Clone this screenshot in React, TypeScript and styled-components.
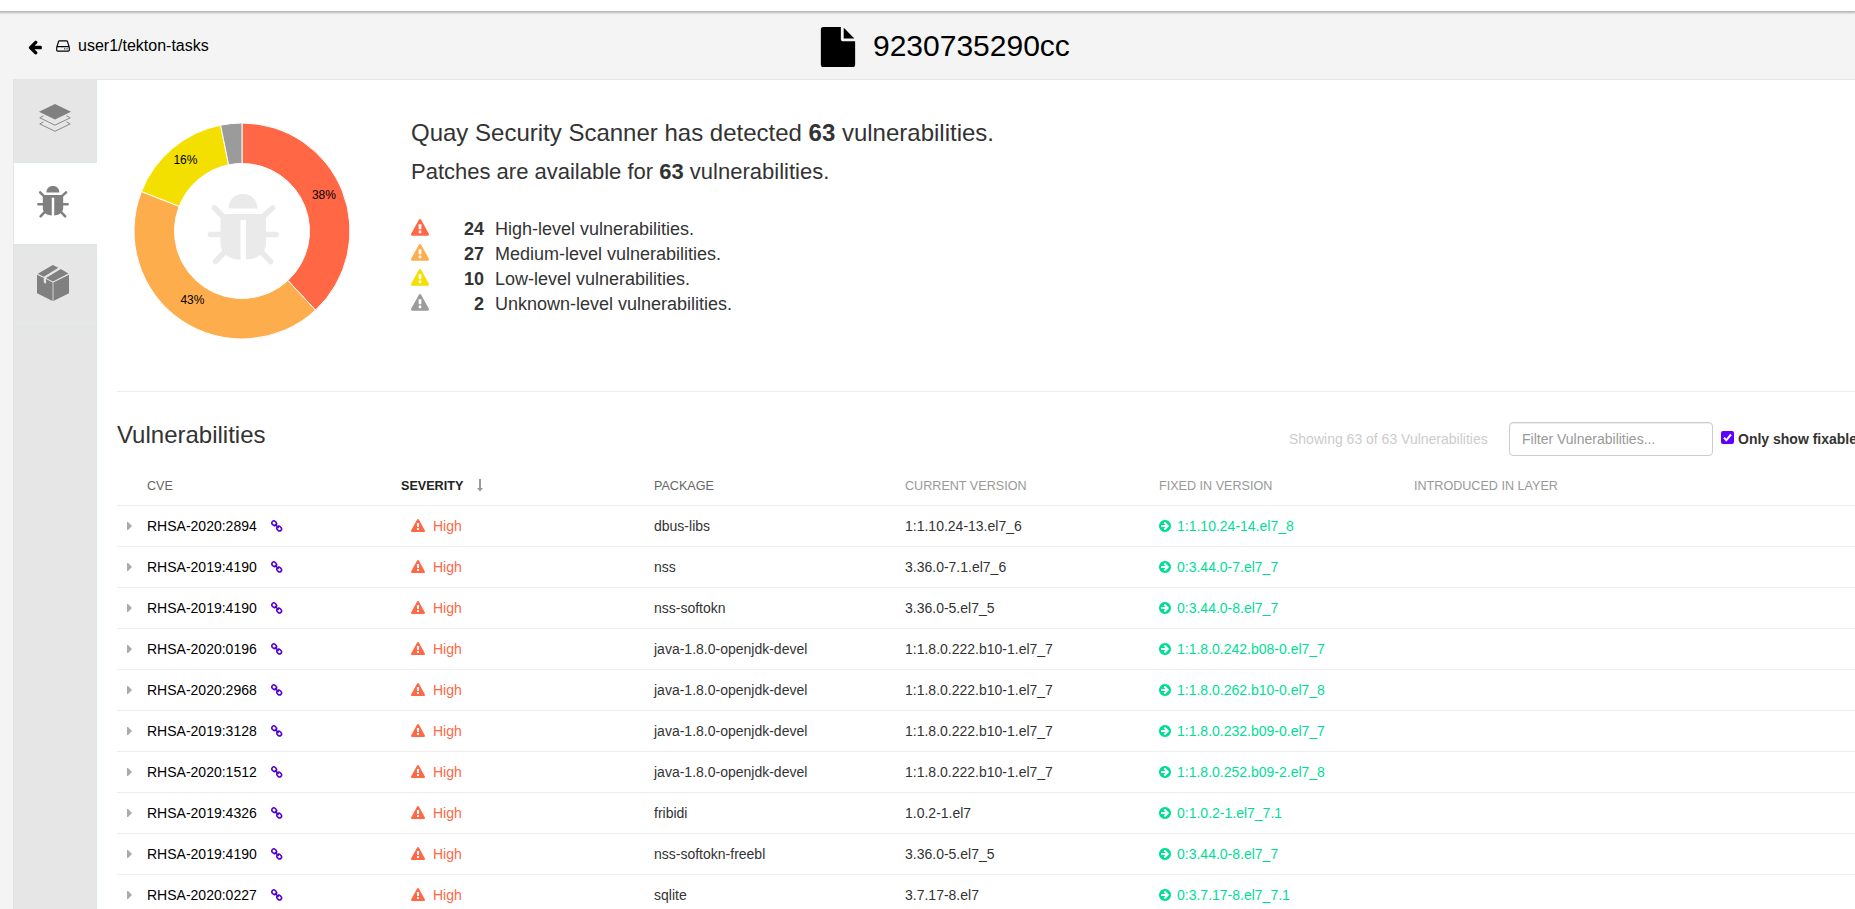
import React from 'react';
import styled, { createGlobalStyle } from 'styled-components';

const Global = createGlobalStyle`
  * { box-sizing: border-box; }
  html, body { margin: 0; height: 100%; overflow: hidden; }
  body { font-family: "Liberation Sans", Arial, sans-serif; font-size: 14px; line-height: 20px; color: #333; background: #f4f4f4; }
`;

const Page = styled.div`width: 1855px; height: 909px; overflow: hidden; display: flex; flex-direction: column; background: #f4f4f4;`;
const NavEdge = styled.div`height: 11px; flex: none; background: #fff; box-shadow: 0 1px 2px 1px rgba(0,0,0,.25); z-index: 1;`;
const Header = styled.header`height: 68px; flex: none; display: grid; grid-template-columns: 818px 1fr; color: #000;`;
const Crumb = styled.a`display: flex; align-items: center; height: 68px; padding: 2px 0 0 27px; font-size: 16px;`;
const Title = styled.h2`display: flex; align-items: center; margin: 0; padding-top: 2px; font-size: 30px; font-weight: 400;`;
const Icon = styled.svg<{ $w: number; $h?: number; $m?: string }>`
  display: block; flex: none; overflow: visible; fill: currentColor;
  width: ${p => p.$w}px; height: ${p => p.$h ?? p.$w}px; margin: ${p => p.$m ?? '0'};
`;
const Frame = styled.div`flex: 1; min-height: 0; margin-left: 13px; display: flex; width: 1900px; border: solid #e4e4e4; border-width: 1px 0 0 1px; background: #fff;`;
const Tabs = styled.nav`width: 83px; flex: none; background: #e6e6e6; border-right: 1px solid #dde8ee;`;
const Tab = styled.div<{ $active?: boolean; $pad: string }>`
  width: 83px; height: ${p => (p.$active ? 82 : 83)}px; padding: ${p => p.$pad}; color: #808080;
  background: ${p => (p.$active ? '#fff' : 'transparent')};
  border-bottom: 1px solid #dbe7ed; border-right: ${p => (p.$active ? 0 : 1)}px solid #dbe7ed;
`;
const Main = styled.main`flex: 1; min-width: 0; padding-left: 20px;`;
const Summary = styled.section`height: 312px; display: flex; border-bottom: 1px solid #eee;`;
const Donut = styled.svg`display: block; width: 250px; height: 300px; flex: none; overflow: visible; font-size: 12px;`;
const Findings = styled.div`padding: 37px 0 0 44px;`;
const Lead = styled.div<{ $size: number }>`font-size: ${p => p.$size}px; line-height: 32px; margin-bottom: 7px;`;
const Levels = styled.div`margin-top: 28px;`;
const Level = styled.div`display: grid; grid-template-columns: 18px 55px auto; column-gap: 0; height: 25px; align-items: center; font-size: 18px;`;
const Count = styled.b`text-align: right;`;
const LevelText = styled.span`padding-left: 11px;`;
const Toolbar = styled.div`height: 73px; display: flex; align-items: flex-start; padding-top: 30px;`;
const Heading = styled.h3`width: 1172px; flex: none; margin: -2px 0 0; font-size: 24px; line-height: 30px; font-weight: 400;`;
const Showing = styled.span`width: 220px; flex: none; padding-top: 7px; color: #ccc;`;
const Filter = styled.input`
  width: 204px; height: 34px; padding: 6px 12px; border: 1px solid #ccc; border-radius: 4px; font: inherit; background: #fff;
  box-shadow: inset 0 1px 1px rgba(0,0,0,.075); flex: none;
  &::placeholder { color: #999; opacity: 1; }
`;
const Fixable = styled.label`display: flex; padding: 7px 0 0 8px; white-space: nowrap; font-weight: 700;`;
const Check = styled.svg`width: 13px; height: 13px; margin: 2px 4px 0 0; display: block;`;
const Grid = styled.div<{ $head?: boolean }>`
  display: grid; grid-template-columns: 30px 254px 253px 251px 254px 255px 1fr; align-items: center;
  height: 41px; border-bottom: 1px solid #eee;
  padding-top: ${p => (p.$head ? 2 : 0)}px;
  font-size: ${p => (p.$head ? 12.6 : 14)}px;
`;
const Th = styled.span<{ $tone?: string }>`
  display: flex; align-items: center; text-transform: uppercase; color: ${p => p.$tone ?? '#666'}; font-weight: ${p => (p.$tone === '#222' ? 700 : 400)};
`;
const Cell = styled.span<{ $color?: string; $pad?: number }>`
  display: flex; align-items: center; white-space: nowrap; color: ${p => p.$color ?? '#333'}; padding-left: ${p => p.$pad ?? 0}px;
`;

type IconProps = { w: number; m?: string };
const Glyph = ({ d, w, m }: IconProps & { d: string }) => (
  <Icon viewBox="0 0 1792 1792" $w={w} $m={m}><path d={d} /></Icon>
);
const WARN = 'M1024 1375v-190q0-14-9.5-23.5t-22.5-9.5h-192q-13 0-22.5 9.5t-9.5 23.5v190q0 14 9.5 23.5t22.5 9.5h192q13 0 22.5-9.5t9.5-23.5zm-2-374l18-459q0-12-10-19-13-11-24-11h-220q-11 0-24 11-10 7-10 21l17 457q0 10 10 16.5t24 6.5h185q14 0 23.5-6.5t10.5-16.5zm-14-934l768 1408q35 63-2 126-17 29-46.5 46t-63.5 17h-1536q-34 0-63.5-17t-46.5-46q-37-63-2-126l768-1408q17-31 47-49t65-18 65 18 47 49z';
const BACK = 'M1664 896v128q0 53-32.5 90.5t-84.5 37.5h-704l293 294q38 36 38 90t-38 90l-75 76q-37 37-90 37-52 0-91-37l-651-652q-37-37-37-90 0-52 37-91l651-650q38-38 91-38 52 0 90 38l75 74q38 38 38 91t-38 91l-293 293h704q52 0 84.5 37.5t32.5 90.5z';
const FILE = 'M1152 512v-472q22 14 36 28l408 408q14 14 28 36h-472zm-128 32q0 40 28 68t68 28h544v1056q0 40-28 68t-68 28h-1344q-40 0-68-28t-28-68v-1600q0-40 28-68t68-28h800v544z';
const GO = 'M1413 896q0-27-18-45l-91-91-362-362q-18-18-45-18t-45 18l-91 91q-18 18-18 45t18 45l189 189h-502q-26 0-45 19t-19 45v128q0 26 19 45t45 19h502l-189 189q-19 19-19 45t19 45l91 91q18 18 45 18t45-18l362-362 91-91q18-18 18-45zm251 0q0 209-103 385.5t-279.5 279.5-385.5 103-385.5-103-279.5-279.5-103-385.5 103-385.5 279.5-279.5 385.5-103 385.5 103 279.5 279.5 103 385.5z';
const HDD = 'M1168 1216a80 80 0 1 1-160 0a80 80 0 1 1 160 0zm256 0a80 80 0 1 1-160 0a80 80 0 1 1 160 0zm112 160v-320q0-13-9.5-22.5t-22.5-9.5h-1216q-13 0-22.5 9.5t-9.5 22.5v320q0 13 9.5 22.5t22.5 9.5h1216q13 0 22.5-9.5t9.5-22.5zm-1230-480h1180l-157-482q-4-13-16-21.5t-26-8.5h-782q-14 0-26 8.5t-16 21.5zm1358 160v320q0 66-47 113t-113 47h-1216q-66 0-113-47t-47-113v-320q0-25 16-75l197-606q17-53 63-86t101-33h782q55 0 101 33t63 86l197 606q16 50 16 75z';

const BugShape = () => (
  <>
    <path d="M21 14.5C21 6 27 0 35.500 0S50 6 50 14.500z" />
    <path d="M13 20H58.500V49C58.500 59 50 65.500 38.500 65.500V26H33V65.500C21 65.500 13 59 13 49z" />
    <path d="M7 14L16 23M65 14L55 23M3 40.500H14M58 40.500H68.500M8 67.500L19 56M63 67.500L52 56" fill="none" stroke="currentColor" strokeWidth="5.600" strokeLinecap="round" />
  </>
);
const Bug = ({ w, m }: IconProps) => <Icon viewBox="0 0 71.500 71" $w={w} $m={m}><BugShape /></Icon>;
const Layers = () => (
  <Icon viewBox="0 0 32 28" $w={32} $h={28}>
    <path d="M16 0L32 7.700L16 15.400L0 7.700z" />
    <path d="M4.500 11.800L.8 13.800L16 21.200L31.200 13.800L27.500 11.800M4.500 17.900L.8 19.900L16 27.300L31.200 19.900L27.500 17.900" fill="none" stroke="currentColor" strokeWidth=".9" />
  </Icon>
);
const Box = () => (
  <Icon viewBox="0 0 32 36" $w={32} $h={36}>
    <path d="M0 9.800L6.800 13V17.600L9 18.800V14.100L15.600 17.400V36L0 28.300zM16.400 17.400L32 9.800V28.300L16.400 36zM.8 8.700L15.800 0L21.400 2.700L6.800 11.700zM9 12.900L23.800 4L31.400 8.600L16 16.400z" />
  </Icon>
);
const Link = () => (
  <Icon viewBox="0 0 12 12" $w={12} $m="0 0 0 14px">
    <g fill="none" stroke="#5000d0" strokeWidth="1.500">
      <rect x="-2.500" y="-2" width="5" height="4" rx="2" transform="translate(3.200 3.300) rotate(45)" />
      <rect x="-2.500" y="-2" width="5" height="4" rx="2" transform="translate(8.200 8.600) rotate(45)" />
      <path d="M3.800 3.900L7.600 8" />
    </g>
  </Icon>
);
const Sort = () => (
  <Icon viewBox="0 0 6 13" $w={6} $h={13} $m="-1px 0 0 14px"><path fill="#999" d="M2 0H4V9H6L3 12.500L0 9H2z" /></Icon>
);

const slices = [
  { n: 24, color: '#ff6745', label: '38%' },
  { n: 27, color: '#fead4d', label: '43%' },
  { n: 10, color: '#f3e000', label: '16%' },
  { n: 2, color: '#9b9b9b', label: '' },
];
const CX = 125, CY = 151, R = 108, r = 67.5;
const at = (a: number, q: number) => [CX + q * Math.sin(a), CY - q * Math.cos(a)];
let acc = 0;
const arcs = slices.map(s => {
  const a = (acc / 63) * 2 * Math.PI;
  acc += s.n;
  const b = (acc / 63) * 2 * Math.PI;
  const big = b - a > Math.PI ? 1 : 0;
  return {
    ...s,
    d: `M${at(a, R)}A${R} ${R} 0 ${big} 1 ${at(b, R)}L${at(b, r)}A${r} ${r} 0 ${big} 0 ${at(a, r)}z`,
    mid: at((a + b) / 2, 88),
  };
});

const levels = [
  ['#ff6745', '24', 'High'], ['#fead4d', '27', 'Medium'], ['#f3e000', '10', 'Low'], ['#9b9b9b', '2', 'Unknown'],
];
const rows = [
  ['2020:2894', 'dbus-libs', '1:1.10.24-13.el7_6', '1:1.10.24-14.el7_8'],
  ['2019:4190', 'nss', '3.36.0-7.1.el7_6', '0:3.44.0-7.el7_7'],
  ['2019:4190', 'nss-softokn', '3.36.0-5.el7_5', '0:3.44.0-8.el7_7'],
  ['2020:0196', 'java-1.8.0-openjdk-devel', '1:1.8.0.222.b10-1.el7_7', '1:1.8.0.242.b08-0.el7_7'],
  ['2020:2968', 'java-1.8.0-openjdk-devel', '1:1.8.0.222.b10-1.el7_7', '1:1.8.0.262.b10-0.el7_8'],
  ['2019:3128', 'java-1.8.0-openjdk-devel', '1:1.8.0.222.b10-1.el7_7', '1:1.8.0.232.b09-0.el7_7'],
  ['2020:1512', 'java-1.8.0-openjdk-devel', '1:1.8.0.222.b10-1.el7_7', '1:1.8.0.252.b09-2.el7_8'],
  ['2019:4326', 'fribidi', '1.0.2-1.el7', '0:1.0.2-1.el7_7.1'],
  ['2019:4190', 'nss-softokn-freebl', '3.36.0-5.el7_5', '0:3.44.0-8.el7_7'],
  ['2020:0227', 'sqlite', '3.7.17-8.el7', '0:3.7.17-8.el7_7.1'],
];

export default function App() {
  return (
    <Page>
      <Global />
      <NavEdge />
      <Header>
        <Crumb>
          <Glyph d={BACK} w={16} m="2px 0 0 0" />
          <Glyph d={HDD} w={16} m="-1px 7px 0 12px" />
          user1/tekton-tasks
        </Crumb>
        <Title><Glyph d={FILE} w={40} m="1px 15px 0 0" />9230735290cc</Title>
      </Header>
      <Frame>
        <Tabs>
          <Tab $pad="24px 0 0 25px"><Layers /></Tab>
          <Tab $active $pad="23px 0 0 23px"><Bug w={32} /></Tab>
          <Tab $pad="20px 0 0 23px"><Box /></Tab>
        </Tabs>
        <Main>
          <Summary>
            <Donut viewBox="0 0 250 300">
              {arcs.map(a => <path key={a.color} d={a.d} fill={a.color} stroke="#fff" />)}
              {arcs.map(a => <text key={a.color} x={a.mid[0]} y={a.mid[1]} textAnchor="middle">{a.label}</text>)}
              <g transform="translate(90.500 114)" color="#eaeaea" fill="#eaeaea"><BugShape /></g>
            </Donut>
            <Findings>
              <Lead $size={24}>Quay Security Scanner has detected <b>63</b> vulnerabilities.</Lead>
              <Lead $size={22}>Patches are available for <b>63</b> vulnerabilities.</Lead>
              <Levels>
                {levels.map(([color, n, name]) => (
                  <Level key={name}>
                    <Cell $color={color}><Glyph d={WARN} w={18} m="-1px 0 0 0" /></Cell>
                    <Count>{n}</Count>
                    <LevelText>{name}-level vulnerabilities.</LevelText>
                  </Level>
                ))}
              </Levels>
            </Findings>
          </Summary>
          <Toolbar>
            <Heading>Vulnerabilities</Heading>
            <Showing>Showing 63 of 63 Vulnerabilities</Showing>
            <Filter placeholder="Filter Vulnerabilities..." />
            <Fixable>
              <Check viewBox="0 0 13 13"><rect width="13" height="13" rx="2" fill="#5c00ff" /><path d="M3 6.700L5.300 9.300L10 3.500" fill="none" stroke="#fff" strokeWidth="2" /></Check>
              Only show fixable
            </Fixable>
          </Toolbar>
          <Grid $head>
            <span />
            <Th>CVE</Th>
            <Th $tone="#222">Severity<Sort /></Th>
            <Th>Package</Th>
            <Th $tone="#999">Current Version</Th>
            <Th $tone="#999">Fixed in Version</Th>
            <Th $tone="#999">Introduced in Layer</Th>
          </Grid>
          {rows.map(([id, pkg, cur, fix], i) => (
            <Grid key={i}>
              <Cell $color="#aaa" $pad={10}><Icon viewBox="0 0 5 8" $w={5} $h={8} $m="-1px 0 0 0"><path d="M0 0H1L5 4L1 8H0z" /></Icon></Cell>
              <Cell $color="#000">RHSA-{id}<Link /></Cell>
              <Cell $color="#ff6745" $pad={10}><Glyph d={WARN} w={14} m="-1px 8px 0 0" />High</Cell>
              <Cell>{pkg}</Cell>
              <Cell>{cur}</Cell>
              <Cell $color="#00de96"><Glyph d={GO} w={14} m="0 5px 0 -1px" />{fix}</Cell>
            </Grid>
          ))}
        </Main>
      </Frame>
    </Page>
  );
}
